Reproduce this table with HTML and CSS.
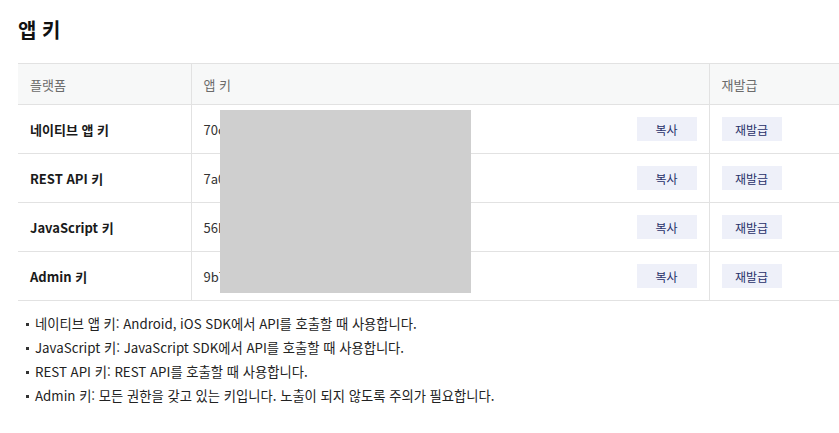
FILE: index.html
```html
<!DOCTYPE html>
<html lang="ko">
<head>
<meta charset="utf-8">
<link rel="stylesheet" href="styles.css">
</head>
<body>
<div class="page">
  <h2 class="title">앱 키</h2>
  <div class="table-wrap">
    <table class="keys">
      <colgroup>
        <col class="c-platform">
        <col class="c-key">
        <col class="c-reissue">
      </colgroup>
      <thead>
        <tr><th>플랫폼</th><th>앱 키</th><th>재발급</th></tr>
      </thead>
      <tbody>
        <tr>
          <td class="name">네이티브 앱 키</td>
          <td><div class="keycell"><span class="key">70c</span><button class="btn">복사</button></div></td>
          <td><button class="btn">재발급</button></td>
        </tr>
        <tr>
          <td class="name">REST API 키</td>
          <td><div class="keycell"><span class="key">7a0</span><button class="btn">복사</button></div></td>
          <td><button class="btn">재발급</button></td>
        </tr>
        <tr>
          <td class="name">JavaScript 키</td>
          <td><div class="keycell"><span class="key">56b</span><button class="btn">복사</button></div></td>
          <td><button class="btn">재발급</button></td>
        </tr>
        <tr>
          <td class="name">Admin 키</td>
          <td><div class="keycell"><span class="key">9b7</span><button class="btn">복사</button></div></td>
          <td><button class="btn">재발급</button></td>
        </tr>
      </tbody>
    </table>
    <div class="redact"></div>
  </div>
  <ul class="notes">
    <li>네이티브 앱 키: Android, iOS SDK에서 API를 호출할 때 사용합니다.</li>
    <li>JavaScript 키: JavaScript SDK에서 API를 호출할 때 사용합니다.</li>
    <li>REST API 키: REST API를 호출할 때 사용합니다.</li>
    <li>Admin 키: 모든 권한을 갖고 있는 키입니다. 노출이 되지 않도록 주의가 필요합니다.</li>
  </ul>
</div>
</body>
</html>
```
FILE: styles.css
```css
html, body {
  margin: 0;
  padding: 0;
  background: #fff;
  overflow: hidden;
}
body {
  font-family: "Noto Sans CJK KR", "Noto Sans", sans-serif;
  color: #222;
}
.page {
  padding: 16px 0 0 18px;
}
.title {
  margin: 0;
  font-size: 20px;
  font-weight: 700;
  line-height: 28px;
  color: #111;
}
.table-wrap {
  position: relative;
  margin-top: 19px;
}
.keys {
  width: 100%;
  border-collapse: collapse;
  table-layout: fixed;
  font-size: 13px;
}
.c-platform { width: 173px; }
.c-reissue { width: 130px; }
.keys th {
  background: #f7f8f8;
  color: #6b6b6b;
  font-weight: 400;
  text-align: left;
  height: 40px;
  padding: 0 12px;
  border-top: 1px solid #e2e2e2;
  border-bottom: 1px solid #e2e2e2;
}
.keys td {
  height: 48px;
  padding: 0 12px;
  border-bottom: 1px solid #e2e2e2;
}
.keys th + th,
.keys td + td {
  border-left: 1px solid #e2e2e2;
}
.keys td.name {
  font-weight: 700;
  color: #1a1a1a;
}
.keycell {
  display: flex;
  align-items: center;
  justify-content: space-between;
}
.key {
  color: #333;
}
.btn {
  width: 60px;
  height: 24px;
  border: 0;
  padding: 0;
  background: #eef0f9;
  color: #28306a;
  font-family: "Noto Sans CJK KR", sans-serif;
  font-size: 12px;
  cursor: pointer;
}
.redact {
  position: absolute;
  left: 202px;
  top: 47px;
  width: 251px;
  height: 183px;
  background: #cfcfcf;
}
.notes {
  list-style: none;
  margin: 11px 0 0;
  padding: 0;
  font-size: 13.3px;
  line-height: 24px;
  color: #222;
}
.notes li {
  position: relative;
  padding-left: 17px;
}
.notes li::before {
  content: "";
  position: absolute;
  left: 8px;
  top: 11px;
  width: 3px;
  height: 3px;
  background: #333;
}
```
